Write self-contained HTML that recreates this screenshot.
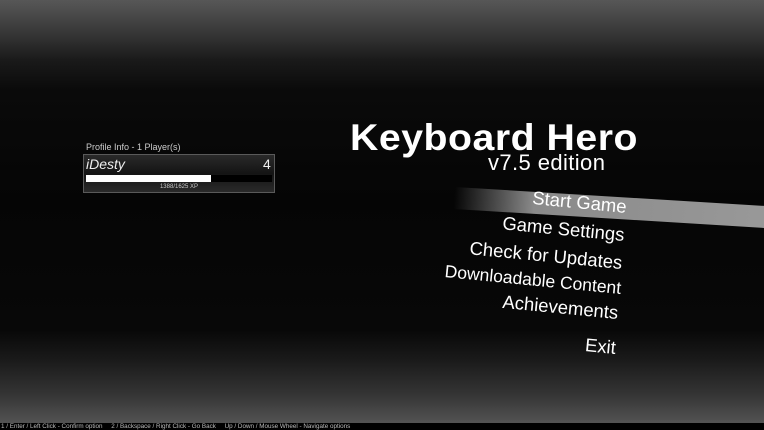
<!DOCTYPE html>
<html><head><meta charset="utf-8"><style>
html,body{margin:0;padding:0}
body{width:764px;height:430px;position:relative;overflow:hidden;font-family:"Liberation Sans",sans-serif;
background:linear-gradient(to bottom,#575757 0px,#3a3a3a 30px,#1a1a1a 60px,#0a0a0a 90px,#050505 200px,#080808 330px,#1a1a1a 360px,#353535 395px,#525252 422px);}
.abs{position:absolute;white-space:nowrap}
.menu{position:absolute;color:#fff;font-size:18.5px;transform:rotate(5.5deg);transform-origin:right center;text-align:right}
</style></head><body>
<div class="abs" style="left:455px;top:187px;width:320px;height:22px;transform:rotate(3.5deg);transform-origin:left top;background:linear-gradient(to right,rgba(150,150,150,0),#8a8a8a 25%,#999 100%)"></div>

<div class="abs" style="left:350px;top:117px;font-size:37px;font-weight:bold;color:#fff;letter-spacing:0.5px;transform:scaleX(1.06);transform-origin:left">Keyboard Hero</div>
<div class="abs" style="left:488px;top:150px;font-size:22px;color:#fff;letter-spacing:0.4px">v7.5 edition</div>

<div class="menu" style="right:137px;top:196px">Start Game</div>
<div class="menu" style="right:140px;top:224px">Game Settings</div>
<div class="menu" style="right:142px;top:252px">Check for Updates</div>
<div class="menu" style="right:143px;top:278px;font-size:17.5px">Downloadable Content</div>
<div class="menu" style="right:146px;top:302px">Achievements</div>
<div class="menu" style="right:148px;top:337px">Exit</div>

<div class="abs" style="left:86px;top:142px;font-size:9px;color:#ccc">Profile Info - 1 Player(s)</div>
<div class="abs" style="left:83px;top:154px;width:190px;height:37px;border:1px solid #5a5a5a;background:linear-gradient(#2a2a2a,#141414 50%,#2a2a2a)"></div>
<div class="abs" style="left:86px;top:156px;font-size:14px;font-style:italic;color:#eee">iDesty</div>
<div class="abs" style="left:263px;top:156px;font-size:14px;color:#eee">4</div>
<div class="abs" style="left:86px;top:175px;width:186px;height:7px;background:#000"></div>
<div class="abs" style="left:86px;top:175px;width:125px;height:7px;background:#fff"></div>
<div class="abs" style="left:83px;top:184px;width:192px;text-align:center;font-size:6px;color:#ccc">1388/1625 XP</div>

<div class="abs" style="left:0;top:423px;width:764px;height:7px;background:#000"></div>
<div class="abs" style="left:1px;top:423px;font-size:6.3px;line-height:7px;color:#bbb">1 / Enter / Left Click - Confirm option &nbsp;&nbsp;&nbsp; 2 / Backspace / Right Click - Go Back &nbsp;&nbsp;&nbsp; Up / Down / Mouse Wheel - Navigate options</div>
</body></html>
